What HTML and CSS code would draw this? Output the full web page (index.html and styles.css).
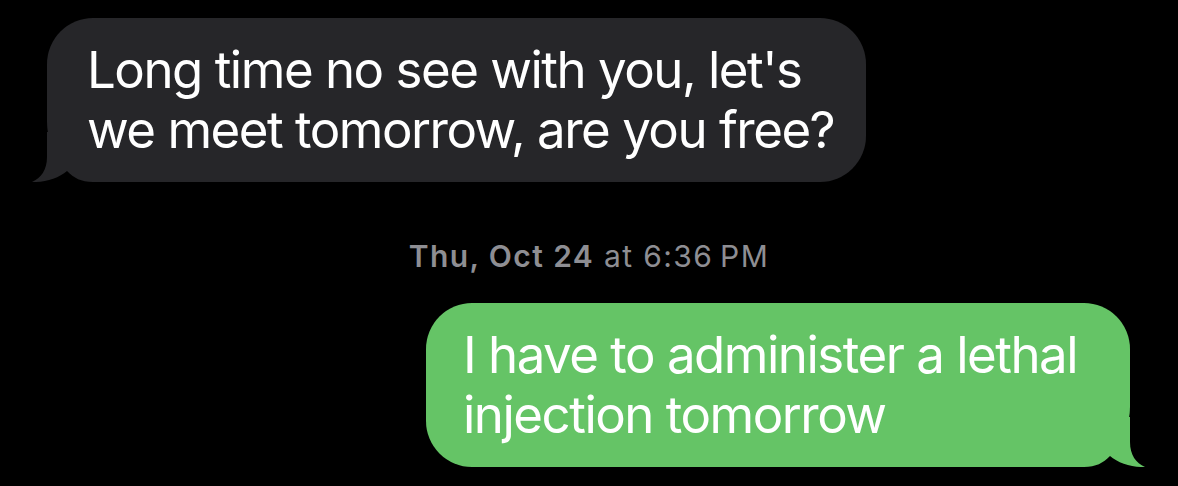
FILE: index.html
```html
<!DOCTYPE html>
<html lang="en">
<head>
<meta charset="utf-8">
<title>Messages</title>
<link rel="stylesheet" href="styles.css">
</head>
<body>
<main class="thread">
  <div class="row row-in">
    <div class="bubble bubble-in">
      <svg class="tail tail-in" width="80" height="50" viewBox="0 0 80 50" aria-hidden="true">
        <path d="M16,0 L16,25 C16,38 10,46 1,50 C14,50.5 28,46 36,39 C43,46 50,50 62,50 L80,50 L80,0 Z"/>
      </svg>
      <p class="text">Long time no see with you, let's we meet tomorrow, are you free?</p>
    </div>
  </div>
  <div class="stamp"><span class="stamp-day">Thu, Oct 24</span> at 6:36&#8239;PM</div>
  <div class="row row-out">
    <div class="bubble bubble-out">
      <svg class="tail tail-out" width="80" height="50" viewBox="0 0 80 50" aria-hidden="true">
        <path d="M16,0 L16,25 C16,38 10,46 1,50 C14,50.5 28,46 36,39 C43,46 50,50 62,50 L80,50 L80,0 Z"/>
      </svg>
      <p class="text">I have to administer a lethal injection tomorrow</p>
    </div>
  </div>
</main>
</body>
</html>
```

FILE: styles.css
```css
html, body {
  margin: 0;
  padding: 0;
  background: #000;
}

body {
  font-family: Inter, "Noto Sans", "Liberation Sans", sans-serif;
  color: #fff;
  width: 1178px;
  height: 486px;
  overflow: hidden;
}

.thread {
  display: flex;
  flex-direction: column;
  padding-top: 18px;
}

.row {
  display: flex;
}

.row-in {
  justify-content: flex-start;
  padding-left: 47px;
}

.row-out {
  justify-content: flex-end;
  padding-right: 48px;
  margin-top: 29px;
}

.bubble {
  position: relative;
  box-sizing: border-box;
  border-radius: 46px;
  padding: 22px 28px;
}

.bubble-in {
  width: 819px;
  background: #262629;
  padding-left: 40px;
  border-bottom-left-radius: 60px;
}

.bubble-out {
  width: 704px;
  background: #65c466;
  padding-left: 37px;
  border-bottom-right-radius: 60px;
}

.text {
  position: relative;
  z-index: 1;
  margin: 0;
  font-size: 51px;
  line-height: 60px;
  letter-spacing: -1.5px;
  font-weight: 400;
}

.tail {
  position: absolute;
  bottom: 0;
  z-index: 0;
  display: block;
}

.tail-in {
  left: -16px;
  fill: #262629;
}

.tail-out {
  right: -16px;
  transform: scaleX(-1);
  fill: #65c466;
}

.stamp {
  margin-top: 56px;
  text-align: center;
  font-size: 30px;
  line-height: 36px;
  color: #8e8e93;
  letter-spacing: 1.4px;
}

.stamp-day {
  font-weight: 600;
}
```
